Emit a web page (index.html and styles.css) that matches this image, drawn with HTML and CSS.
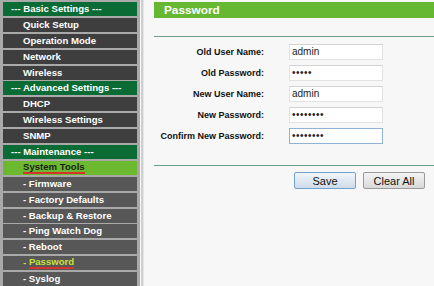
FILE: index.html
```html
<!DOCTYPE html>
<html lang="en">
<head>
  <meta charset="UTF-8">
  <meta name="viewport" content="width=device-width, initial-scale=1.0">
  <title>Password</title>
  <link rel="stylesheet" href="styles.css">
</head>
<body>
  <div class="page">
    <ul class="menu">
      <li class="group">--- Basic Settings ---</li>
      <li>Quick Setup</li>
      <li>Operation Mode</li>
      <li>Network</li>
      <li>Wireless</li>
      <li class="group">--- Advanced Settings ---</li>
      <li>DHCP</li>
      <li>Wireless Settings</li>
      <li>SNMP</li>
      <li class="group">--- Maintenance ---</li>
      <li class="active"><span class="mark">System Tools</span></li>
      <li class="sub">- Firmware</li>
      <li class="sub">- Factory Defaults</li>
      <li class="sub">- Backup &amp; Restore</li>
      <li class="sub">- Ping Watch Dog</li>
      <li class="sub">- Reboot</li>
      <li class="sub current">- <span class="mark">Password</span></li>
      <li class="sub">- Syslog</li>
    </ul>
    <div class="divider"></div>
    <div class="content">
      <div class="title">Password</div>
      <form class="pw-form">
        <div class="row">
          <label for="old-user">Old User Name:</label>
          <input type="text" id="old-user" value="admin">
        </div>
        <div class="row">
          <label for="old-pass">Old Password:</label>
          <input type="password" id="old-pass" value="admin">
        </div>
        <div class="row">
          <label for="new-user">New User Name:</label>
          <input type="text" id="new-user" value="admin">
        </div>
        <div class="row">
          <label for="new-pass">New Password:</label>
          <input type="password" id="new-pass" value="password">
        </div>
        <div class="row">
          <label for="confirm-pass">Confirm New Password:</label>
          <input type="password" id="confirm-pass" class="focused" value="password">
        </div>
        <div class="actions">
          <button type="button" class="btn primary">Save</button>
          <button type="button" class="btn">Clear All</button>
        </div>
      </form>
    </div>
  </div>
</body>
</html>
```

FILE: styles.css
```css
html, body {
  margin: 0;
  padding: 0;
  height: 100%;
  background-color: #f7f7f7;
  font-family: "Liberation Sans", Arial, sans-serif;
  overflow: hidden;
}
.page {
  display: flex;
  height: 286px;
}
.menu {
  list-style: none;
  margin: 0;
  padding: 2px 3px 0 3px;
  width: 134px;
  background: #a9a9a9;
  display: flex;
  flex-direction: column;
  gap: 1.9px;
}
.menu li {
  height: 14px;
  line-height: 14px;
  padding-left: 20px;
  background: #3e3e3e;
  color: #fff;
  font-size: 9.6px;
  font-weight: bold;
  white-space: nowrap;
}
.menu li.group {
  padding-left: 8px;
  background: #0b6b35;
}
.menu li.active {
  background: #6cb92f;
  color: #1d1d1d;
}
.menu li.sub {
  background: #575757;
}
.menu li.current {
  color: #c9e23a;
}
.mark {
  display: inline-block;
  line-height: 10px;
  border-bottom: 2px solid #d7322a;
  vertical-align: top;
  margin-top: 1px;
}
.divider {
  width: 2px;
  margin-left: 1px;
  background: #cfcfcf;
  border-right: 1px solid #e6e6e6;
}
.content {
  flex: 1;
  padding: 2px 0 0 10px;
}
.title {
  height: 16px;
  line-height: 16px;
  background: #66b833;
  color: #fff;
  font-size: 11.8px;
  font-weight: bold;
  padding-left: 10px;
}
.pw-form {
  margin-top: 18px;
  border-top: 1px solid #6f9e88;
  padding-top: 4px;
}
.row {
  display: flex;
  align-items: center;
  height: 21px;
}
.row label {
  width: 110px;
  text-align: right;
  white-space: nowrap;
  font-size: 9px;
  font-weight: bold;
  color: #111;
}
.row input {
  margin-left: 25px;
  width: 88px;
  height: 14px;
  padding: 0 2px;
  border: 1px solid #e2e2e2;
  border-top-color: #d2d2d2;
  background: #fff;
  font-family: "Liberation Sans", Arial, sans-serif;
  font-size: 10px;
  color: #222;
  outline: none;
}
.row input[type="password"] {
  font-size: 10px;
  letter-spacing: 0.5px;
}
.row input.focused {
  border-color: #8fb3d6;
}
.actions {
  margin-top: 19px;
  border-top: 1px solid #6f9e88;
  padding: 6px 0 0 140px;
  display: flex;
  gap: 7px;
}
.btn {
  width: 62px;
  height: 17px;
  padding: 0;
  border: 1px solid #9a9a9a;
  border-radius: 2px;
  background: linear-gradient(#f4f4f4, #d8d8d8);
  font-family: "Liberation Sans", Arial, sans-serif;
  font-size: 11px;
  color: #111;
}
.btn.primary {
  border-color: #6fa3d2;
  background: linear-gradient(#f0f5fa, #cfdcea);
}
```
